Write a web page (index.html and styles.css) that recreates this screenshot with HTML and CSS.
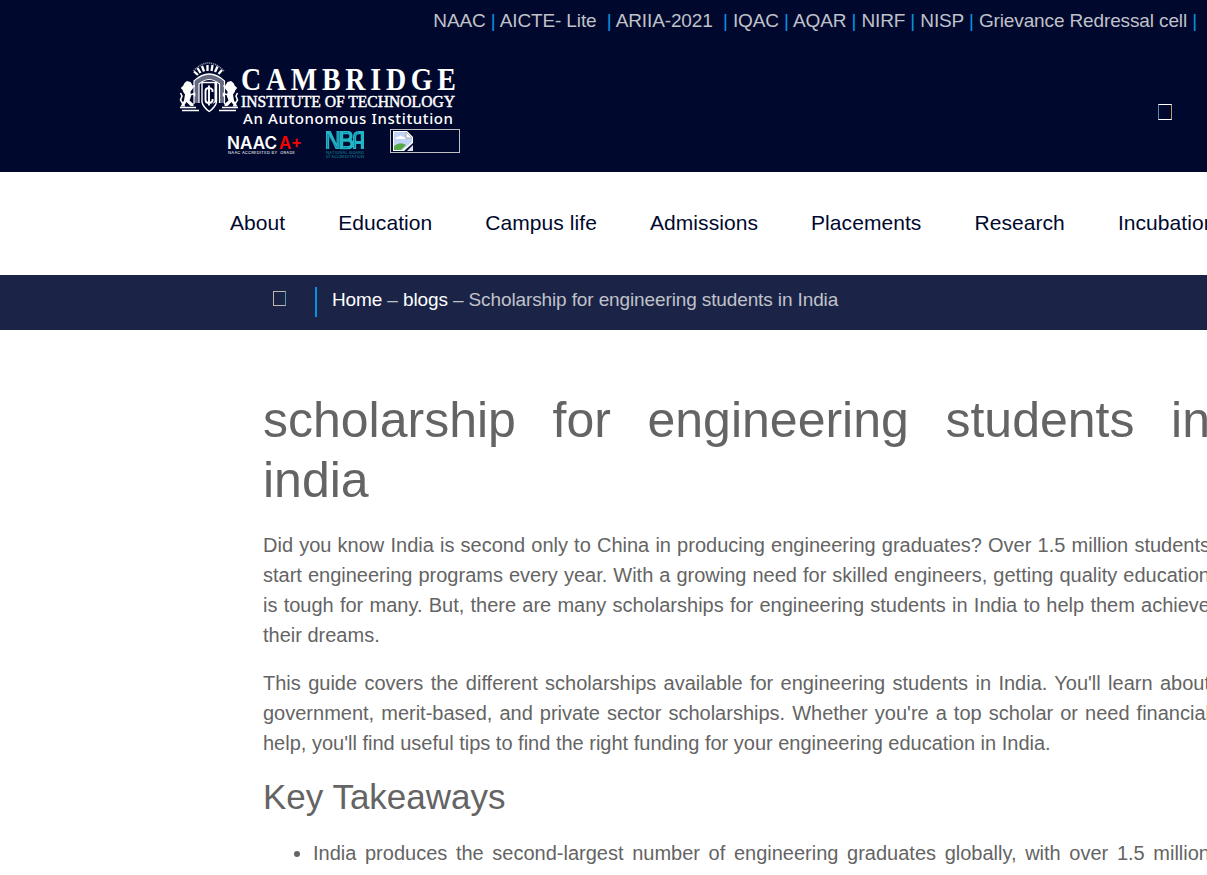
FILE: index.html
```
<!DOCTYPE html>
<html lang="en">
<head>
<meta charset="utf-8">
<title>Scholarship for engineering students in India</title>
<link rel="stylesheet" href="styles.css">
</head>
<body>
<header class="header">
  <div class="toplinks"><a>NAAC</a> <i>|</i> <a>AICTE- Lite</a> &nbsp;<i>|</i> <a>ARIIA-2021</a> &nbsp;<i>|</i> <a>IQAC</a> <i>|</i> <a>AQAR</a> <i>|</i> <a>NIRF</a> <i>|</i> <a>NISP</a> <i>|</i> <a>Grievance Redressal cell</a> <i>|</i></div>
  <div class="brand">
    <svg class="logo" width="290" height="104" viewBox="176 58 290 104">
      <g fill="none" stroke="#fff">
        <path d="M193.500 71Q208.500 55 224 71" stroke-width="1.6" stroke-dasharray="1.2 .8" opacity=".55"/>
        <path d="M198 75l-4-3.500M200.500 73l-3-5M204 71.500l-2-5.500M207.500 71v-6M211.500 71l1-6M215 72l2.500-5.500M218.500 74l3.500-4" stroke-width="2.300"/>
        <path d="M196.500 103V83Q209 70 222 83V103" stroke-width="5" opacity=".4"/>
        <path d="M194 104V81Q209 67 224.500 81V104M199 103V84Q209 75 219.500 84V103" stroke-width="1.200"/>
        <path d="M202 82.500H216.500V102Q215.500 107 209.200 111.500Q203 107 202 102Z" fill="#00082d" stroke-width="1.400"/>
      </g>
      <path d="M209.500 106l6.500-4v-19h-1.500v18q-1 3-5 5z" fill="#fff"/>
      <path d="M212.500 92v-2q-1-2-3.500-2-3.500 0-3.500 3v9q0 3 3.500 3 2.500 0 3.500-2v-2M209 85.500v20" fill="none" stroke="#fff" stroke-width="1.900"/>
      <g id="lion">
        <path d="M184.500 83l2.500-2 3.500 1 2.500 4-.5 3-2 2.500.5 5-1.500 4 4 3.500v2h-3l-4-4-2 3 1 1.500h-5l3.500-6 1-6-2-3-.5-3-1.500-1 2-1.500z" fill="#fff"/>
        <path d="M190 90l4.500-4.500M190 95l4.500-1.500v3M185 91l-3.500-3M183 104l-2.500-4 1.500-4-1.500-3M180 107.500h16M182 110.500h17" fill="none" stroke="#fff" stroke-width="1.600"/>
      </g>
      <use href="#lion" transform="translate(418 0) scale(-1 1)"/>
      <g fill="#fff">
        <text class="serif" transform="translate(241 90) scale(.86 1)" x="0" y="0" font-size="32.500" textLength="250" lengthAdjust="spacing">CAMBRIDGE</text>
        <text class="serif inst" x="241" y="107" font-size="17.500" textLength="214" lengthAdjust="spacingAndGlyphs">INSTITUTE OF TECHNOLOGY</text>
        <text class="sans" x="243" y="123.500" font-size="15" textLength="210" lengthAdjust="spacing">An Autonomous Institution</text>
        <text class="naac" x="227" y="148.500" font-size="17" textLength="50" lengthAdjust="spacingAndGlyphs">NAAC</text>
        <text class="tiny" x="228" y="154" font-size="4" textLength="67" xml:space="preserve">NAAC ACCREDITED BY  GRADE</text>
      </g>
      <text class="grade" x="279" y="148.500" font-size="17.500" textLength="23" lengthAdjust="spacingAndGlyphs" fill="#f00">A+</text>
      <g fill="none" stroke="#20b6c5" stroke-width="3.200">
        <path d="M327.600 149v-16.500h2l7 15h1.500v-16.500"/>
        <path d="M340 132.600h8q3 0 3 3.500t-3 4h-7h8q3 1 3 4t-3 3.600h-9M341.600 132v16"/>
        <path d="M354.600 149v-12q0-4.400 4-4.400h3.800v16.400M354 142.500h8"/>
      </g>
      <path d="M327.600 149v-15l9.500 14M338 132v16M343 132.600h5M343 147.500h5M354.600 148v-11q0-4 4-4.400" fill="none" stroke="#1685ad" stroke-width="1"/>
      <g class="tiny" fill="#168d9f"><text x="326" y="153.700" font-size="4" textLength="38">NATIONAL BOARD</text><text x="326" y="157.700" font-size="4" textLength="38">of ACCREDITATION</text></g>
      <rect x="390.500" y="129.500" width="69" height="23" fill="none" stroke="#c0c0c0"/>
      <path d="M393 131h14l6 6v6l-9 8h-11z" fill="#fff"/>
      <path d="M394 132h12v6h6v4l-10 8h-8z" fill="#c2d3f5"/>
      <path d="M395.500 139q.5-3 3-2 2-3 4.500 0 2.500 0 2.500 2z" fill="#fff"/>
      <path d="M394 150v-4q6-5 12-1l-5 5z" fill="#55aa45"/>
      <path d="M407 151l6-6v6z" fill="#dce4ee"/>
      <path d="M406 132v6h6z" fill="#fff" stroke="#999" stroke-width=".7"/>
    </svg>
    <span class="missing menu"></span>
  </div>
</header>
<nav class="nav"><a>About</a><a>Education</a><a>Campus life</a><a>Admissions</a><a>Placements</a><a>Research</a><a>Incubation</a></nav>
<div class="crumbs"><span class="missing home"></span><p class="trail"><a>Home</a> – <a>blogs</a> – Scholarship for engineering students in India</p></div>
<main class="article">
  <h1>scholarship for engineering students in india</h1>
  <p>Did you know India is second only to China in producing engineering graduates? Over 1.5 million students start engineering programs every year. With a growing need for skilled engineers, getting quality education is tough for many. But, there are many scholarships for engineering students in India to help them achieve their dreams.</p>
  <p>This guide covers the different scholarships available for engineering students in India. You'll learn about government, merit-based, and private sector scholarships. Whether you're a top scholar or need financial help, you'll find useful tips to find the right funding for your engineering education in India.</p>
  <h2>Key Takeaways</h2>
  <ul><li>India produces the second-largest number of engineering graduates globally, with over 1.5 million</li></ul>
</main>
</body>
</html>
```
FILE: styles.css
```
* { box-sizing: border-box; }
html, body { height: 875px; overflow: hidden; }
body { margin: 0; background: #fff; font-family: "Liberation Sans", Arial, sans-serif; color: #646464; }
.header { height: 172px; background: #00082d; }
.toplinks { height: 58px; padding: 10px 10px 0 0; text-align: right; font-size: 19px; line-height: 22px; letter-spacing: -.13px; color: #c0c2ca; white-space: nowrap; }
.toplinks i { font-style: normal; color: #0693e3; }
.brand { display: flex; justify-content: space-between; padding: 0 35px 0 176px; }
.logo { display: block; }
.serif { font-family: "Liberation Serif", serif; font-weight: 700; }
.inst { font-weight: 400; stroke: #fff; stroke-width: .5px; }
.sans { font-family: "Noto Sans", sans-serif; font-weight: 500; }
.naac, .grade { font-family: Inter, sans-serif; font-weight: 600; }
.tiny { font-family: Inter, sans-serif; font-weight: 400; }
.missing { display: block; flex: none; }
.menu { width: 14px; height: 16px; margin-top: 46px; border: 1px solid #fff; border-left-color: #4e8cab; border-right-color: #b69b6b; }
.nav { height: 103px; display: flex; gap: 53px; padding: 39px 0 0 230px; font-size: 21px; line-height: 24px; letter-spacing: .07px; color: #00082d; white-space: nowrap; overflow: hidden; }
.crumbs { height: 55px; display: flex; align-items: flex-start; padding: 12px 0 0 273px; background: #1b2447; }
.home { width: 13px; height: 15px; margin-top: 4px; border: 1px solid #c0b7b3; border-right-color: #5b97a2; }
.trail { height: 30px; margin: 0 0 0 29px; padding-left: 15px; border-left: 2px solid #0693e3; font-size: 19px; line-height: 25px; letter-spacing: -.12px; color: #c0c2ca; white-space: nowrap; }
.trail a { color: #fff; }
.article { width: 947px; margin-left: 263px; padding-top: 60px; text-align: justify; font-size: 20px; line-height: 30px; }
.article h1 { margin: 0 0 20px; font-size: 50px; line-height: 60px; font-weight: 400; }
.article p { margin: 0 0 18px; }
.article h2 { margin: 0; font-size: 35px; line-height: 42px; font-weight: 400; }
.article ul { margin: 20px 0 0; padding-left: 50px; }
.article li { text-align-last: justify; }
```
